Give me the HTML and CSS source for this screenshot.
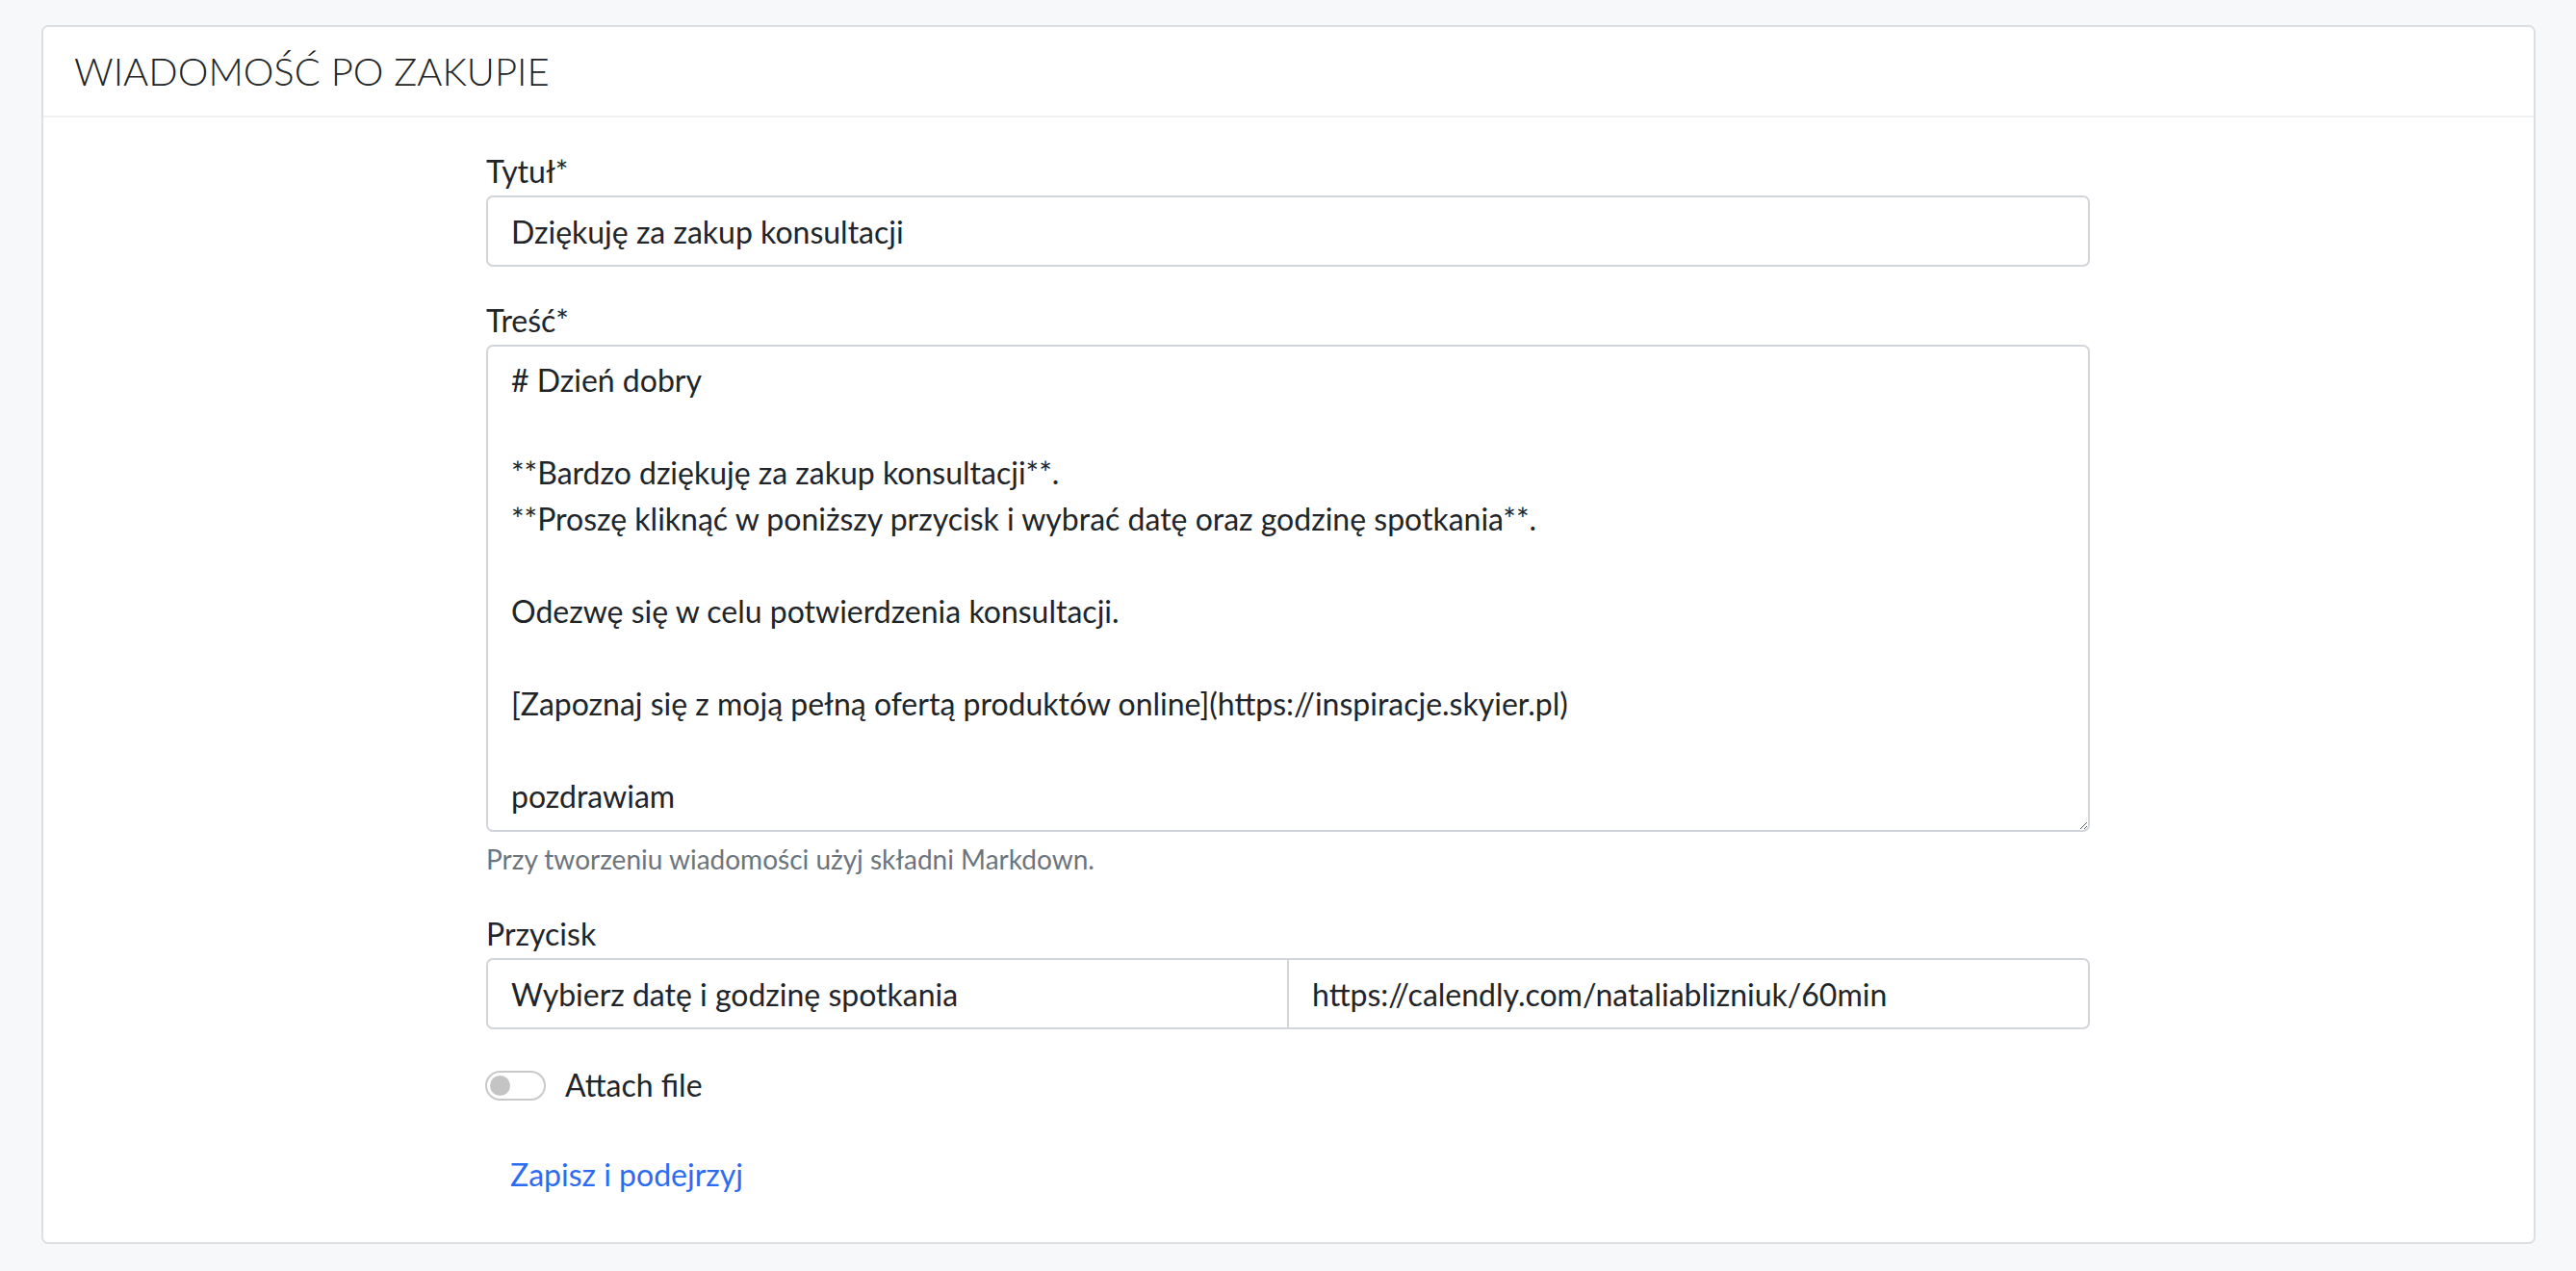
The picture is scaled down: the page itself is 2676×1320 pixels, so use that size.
FILE: index.html
```html
<!DOCTYPE html>
<html lang="pl">
<head>
<meta charset="utf-8">
<title>Wiadomość po zakupie</title>
<link rel="stylesheet" href="styles.css">
</head>
<body>
<div class="page">
  <section class="card">
    <header class="card-header">
      <h1 class="card-title">WIADOMOŚĆ PO ZAKUPIE</h1>
    </header>
    <div class="card-body">
      <form class="form">
        <div class="group">
          <label class="label" for="title">Tytuł*</label>
          <input class="control" id="title" type="text" value="Dziękuję za zakup konsultacji">
        </div>
        <div class="group group-help">
          <label class="label" for="content">Treść*</label>
          <textarea class="control textarea" id="content"># Dzień dobry

**Bardzo dziękuję za zakup konsultacji**.
**Proszę kliknąć w poniższy przycisk i wybrać datę oraz godzinę spotkania**.

Odezwę się w celu potwierdzenia konsultacji.

[Zapoznaj się z moją pełną ofertą produktów online](https://inspiracje.skyier.pl)

pozdrawiam</textarea>
          <small class="help">Przy tworzeniu wiadomości użyj składni Markdown.</small>
        </div>
        <div class="group">
          <label class="label" for="btn-text">Przycisk</label>
          <div class="input-group">
            <input class="control control-left" id="btn-text" type="text" value="Wybierz datę i godzinę spotkania">
            <input class="control control-right" type="text" value="https://calendly.com/nataliablizniuk/60min">
          </div>
        </div>
        <div class="switch-row">
          <span class="switch"><span class="knob"></span></span>
          <span class="switch-label">Attach file</span>
        </div>
        <div class="actions">
          <button type="button" class="btn-link">Zapisz i podejrzyj</button>
        </div>
      </form>
    </div>
  </section>
</div>
</body>
</html>
```

FILE: styles.css
```css
* {
  box-sizing: border-box;
}

html, body {
  margin: 0;
  padding: 0;
}

body {
  background: #f7f8fa;
  font-family: Lato, "Noto Sans", "Liberation Sans", sans-serif;
  font-size: 32px;
  color: #212529;
}

.page {
  padding: 26px 42px 29px 43px;
}

.card {
  background: #ffffff;
  border: 2px solid #dedfe0;
  border-radius: 7px;
}

.card-header {
  height: 94px;
  border-bottom: 2px solid #f1f2f3;
  display: flex;
  align-items: center;
  padding: 0 32px;
}

.card-title {
  margin: 0;
  font-family: Lato, "Noto Sans", sans-serif;
  font-weight: 300;
  font-size: 40px;
  line-height: 1.2;
  color: #222426;
}

.card-body {
  padding: 32px 0 34px 460px;
}

.form {
  width: 1666px;
}

.group {
  margin-bottom: 32px;
}

.group-help {
  margin-bottom: 33px;
}

.label {
  display: block;
  font-size: 32px;
  line-height: 48px;
  margin-bottom: 1px;
  color: #212529;
}

.control {
  display: block;
  width: 100%;
  height: 74px;
  border: 2px solid #d2d6da;
  border-radius: 7px;
  background: #fff;
  font-family: Lato, "Noto Sans", sans-serif;
  font-size: 32px;
  color: #212529;
  padding: 0 24px;
  outline: none;
}

.textarea {
  height: 506px;
  padding: 11px 24px;
  line-height: 48px;
  resize: vertical;
  overflow: hidden;
}

.help {
  display: block;
  margin-top: 7px;
  font-size: 28px;
  line-height: 42px;
  color: #6c757d;
}

.input-group {
  display: flex;
}

.control-left {
  flex: 1 1 0;
  border-top-right-radius: 0;
  border-bottom-right-radius: 0;
}

.control-right {
  flex: 1 1 0;
  margin-left: -2px;
  border-top-left-radius: 0;
  border-bottom-left-radius: 0;
}

.switch-row {
  display: flex;
  align-items: center;
  gap: 20px;
  height: 48px;
  margin-top: 34px;
}

.switch {
  width: 63px;
  height: 31px;
  border: 2px solid #c9c9c9;
  border-radius: 16px;
  display: flex;
  align-items: center;
  padding-left: 3px;
  margin-left: -1px;
}

.knob {
  width: 21px;
  height: 21px;
  border-radius: 50%;
  background: #c4c4c4;
}

.switch-label {
  font-size: 32px;
  line-height: 48px;
  color: #212529;
}

.actions {
  margin-top: 33px;
}

.btn-link {
  display: inline-block;
  background: none;
  border: 0;
  padding: 12px 25px;
  margin: 0;
  font-family: Lato, "Noto Sans", sans-serif;
  font-size: 32px;
  line-height: 48px;
  color: #2b6cf2;
  cursor: pointer;
}
```
